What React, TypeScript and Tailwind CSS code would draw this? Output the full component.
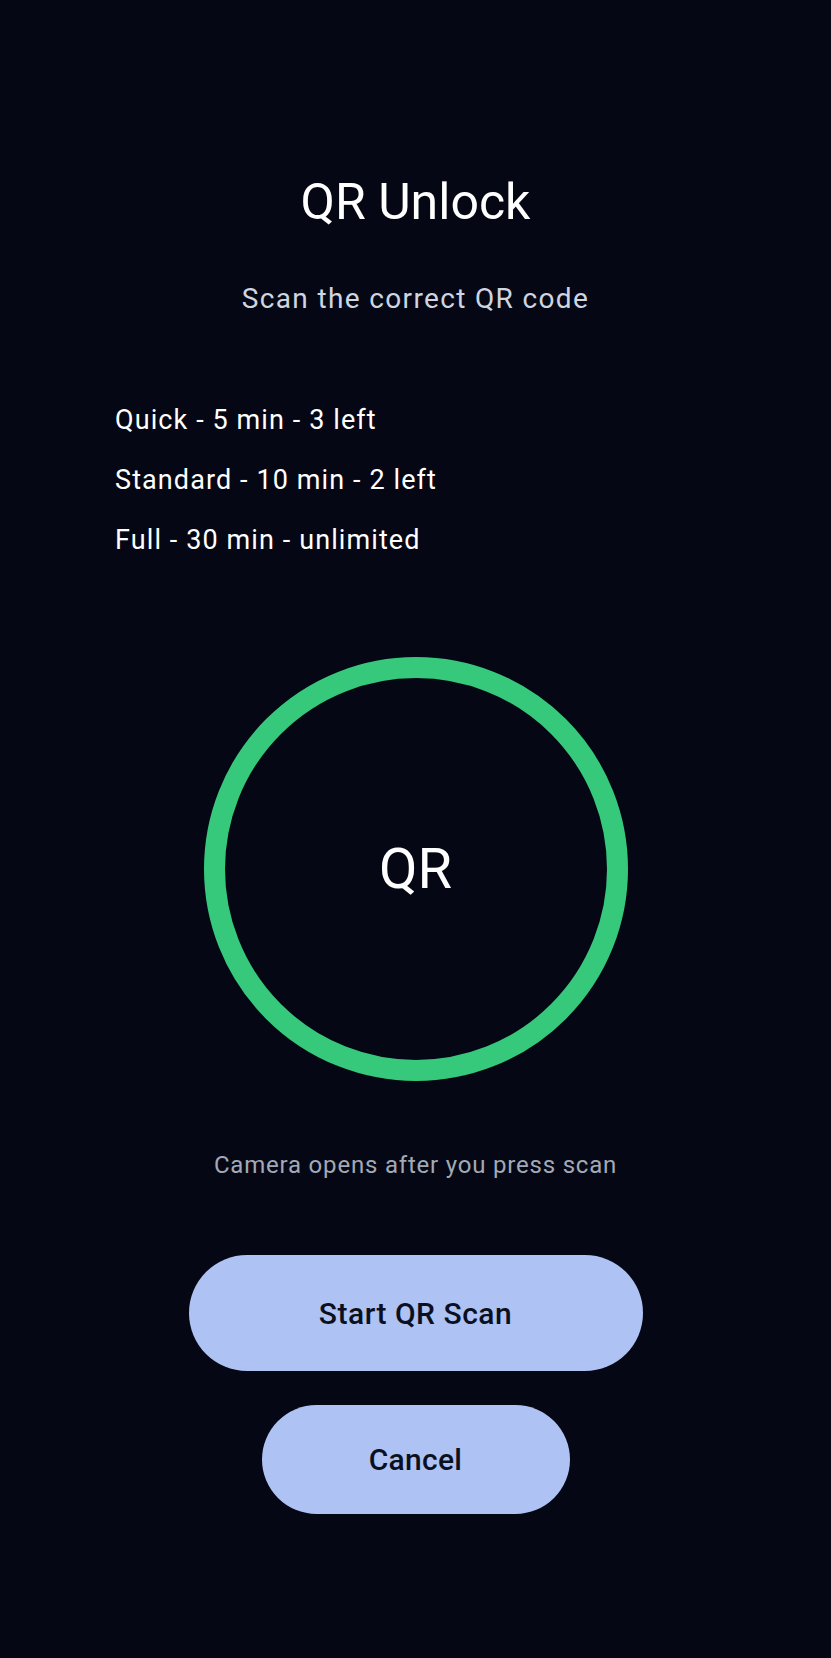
const plans = ["Quick - 5 min - 3 left", "Standard - 10 min - 2 left", "Full - 30 min - unlimited"];

export default function App() {
  return (
    <div className="min-h-screen w-full bg-[#050814] flex flex-col items-center font-['Roboto',sans-serif]">
      <h1 className="mt-[177px] text-[50px] leading-[50px] font-normal text-white">QR Unlock</h1>
      <p className="mt-[58px] text-[28px] leading-[28px] tracking-[1.35px] text-[#cfd5e1]">Scan the correct QR code</p>

      <div className="mt-[94px] w-full pl-[115px] flex flex-col gap-[33px]">
        {plans.map((p) => (
          <div key={p} className="text-[27px] leading-[27px] tracking-[1.1px] text-white">
            {p}
          </div>
        ))}
      </div>

      <div className="mt-[103px] w-[424px] h-[424px] rounded-full border-[21px] border-[#36c97c] flex items-center justify-center">
        <span className="text-[56px] leading-[56px] text-white">QR</span>
      </div>

      <p className="mt-[72px] text-[24px] leading-[24px] tracking-[0.8px] text-[#a3a9b6]">Camera opens after you press scan</p>

      <button className="mt-[78px] w-[454px] h-[116px] rounded-full bg-[#aec2f4] text-[30px] font-medium tracking-[0.5px] text-[#0b1020]">
        Start QR Scan
      </button>
      <button className="mt-[34px] w-[308px] h-[109px] rounded-full bg-[#aec2f4] text-[30px] font-medium tracking-[0.3px] text-[#0b1020]">
        Cancel
      </button>
    </div>
  );
}
